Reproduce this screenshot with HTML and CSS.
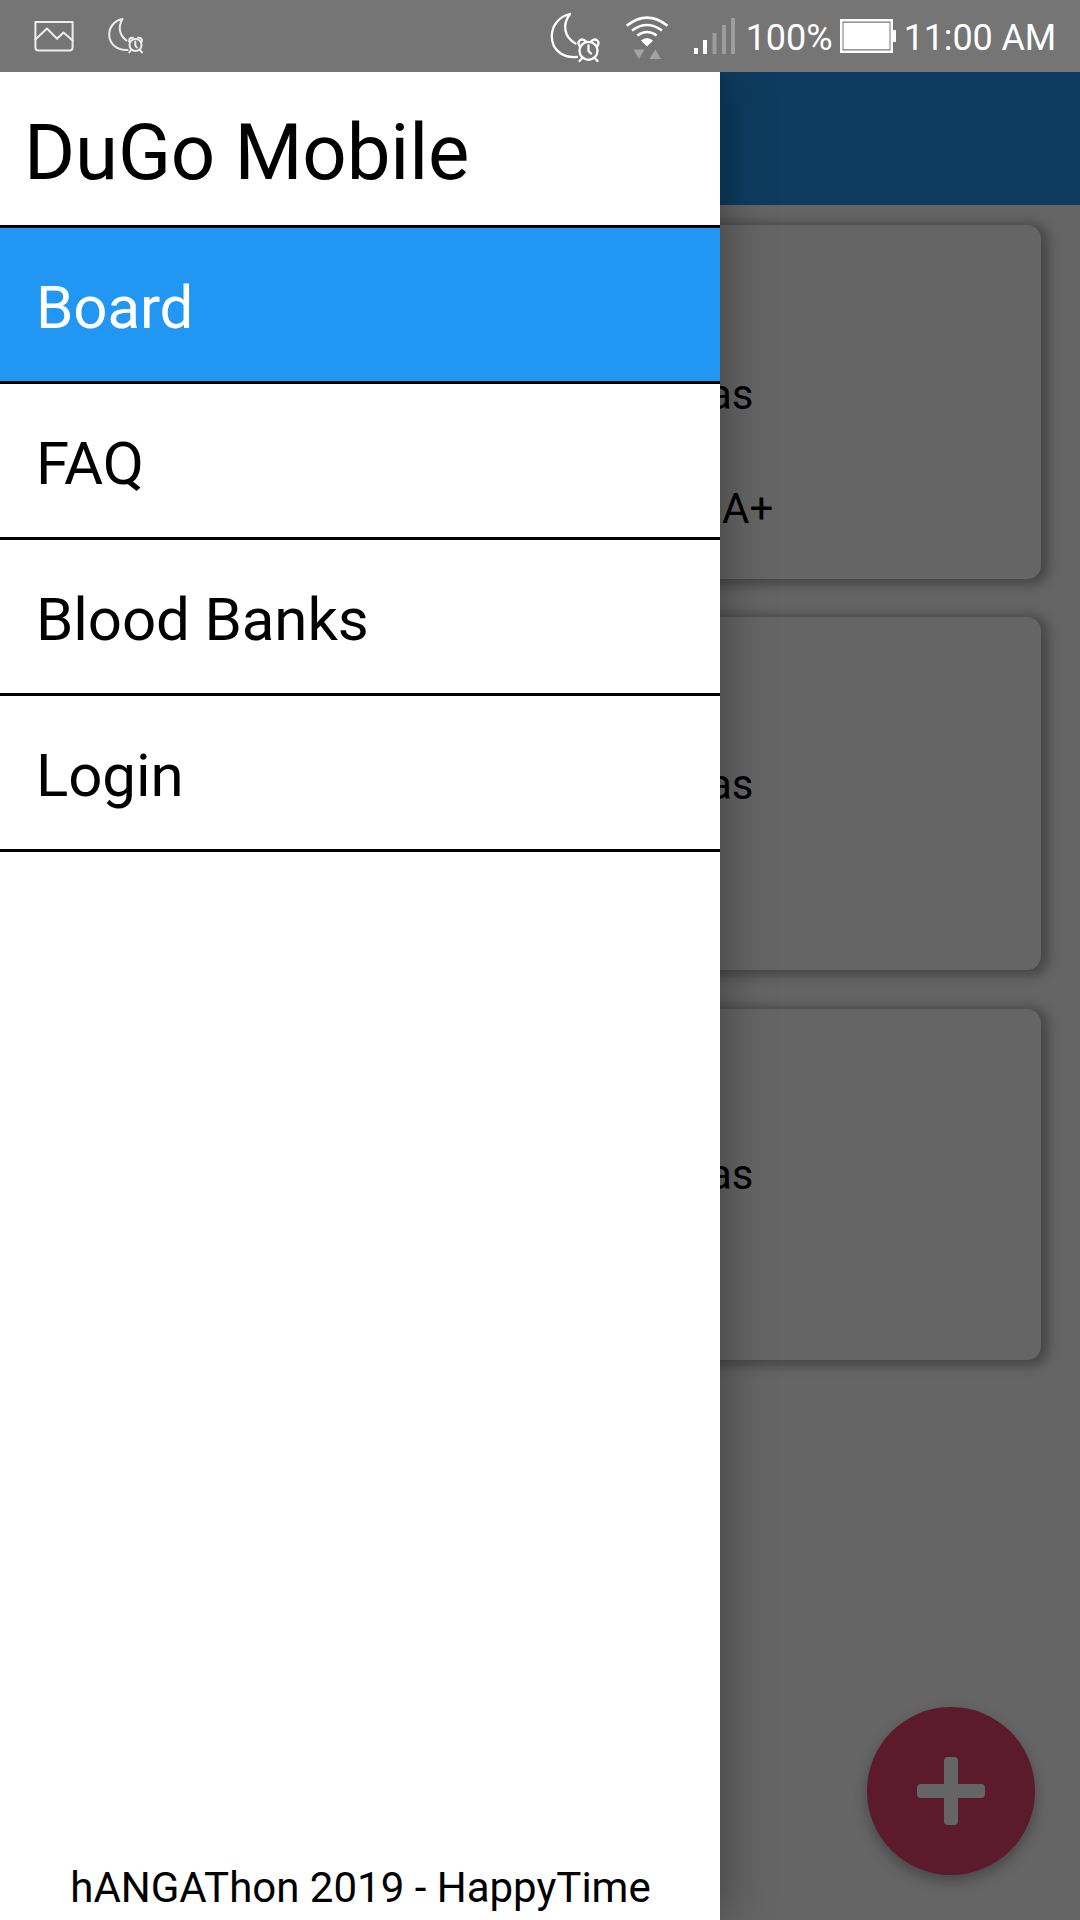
FILE: index.html
```html
<!DOCTYPE html>
<html lang="en">
<head>
<meta charset="utf-8">
<title>DuGo Mobile</title>
<link rel="stylesheet" href="styles.css">
</head>
<body>
<div class="phone">
  <header class="status">
    <div class="status-left">
      <svg width="40" height="34" viewBox="34 19 40 34" class="line soft">
        <path d="M35.4 22H72.6V47.5Q72.6 50.5 69.6 50.5H38.4Q35.4 50.5 35.4 47.5Z"/>
        <path d="M35.4 39.5L47 28.5L57 38.8L63.5 32.5L72.6 40.5"/>
      </svg>
      <svg width="38" height="38" viewBox="107 18 38 38" class="line soft">
        <path d="M127.5 51C116.500 51.500 109.200 44.500 109.200 35.500C109.200 28 114.500 21.500 122.500 20C118 27.500 119 36 126.500 41.500"/>
        <circle cx="135.500" cy="46" r="6"/>
        <path d="M135.300 42.500V46.500L136.800 48.500M129.200 42.500Q128.600 38.500 133 38.800M138 38.800Q142.400 38.500 141.800 42.500M131 51L129.300 53.400M140 51L142 53.400"/>
      </svg>
    </div>
    <div class="status-right">
      <svg class="line moon" width="52" height="52" viewBox="549 11 52 52">
        <path d="M577 57C562 58.500 551.800 49 551.800 36.500C551.800 25.500 559 16.500 570 14C562 24.500 564 37 575.500 43.500"/>
        <circle cx="588.500" cy="50.800" r="9"/>
        <path d="M588.500 45.500V51L591 53.500M579.600 46C576.500 41.500 581 37.500 585.500 41M591.500 41C596 37.500 600.500 41.500 597.400 46M582.500 57.800L579.500 61M594.500 57.800L597.500 61"/>
      </svg>
      <svg class="wifi" width="44" height="46" viewBox="625 15 44 46">
        <path class="arc" d="M626.700 25.800Q647 9.500 667.500 25.800M632 30.500Q647 19.500 662 30.500M637.300 35.500Q647 28.500 656.700 35.500"/>
        <path fill="#fff" d="M641 40.500Q647 35.500 653 40.500L647 46.500Z"/>
        <path fill="#a3a3a3" d="M633.500 49.500H644.500L639 59ZM649.500 59H661L655.300 49.500Z"/>
      </svg>
      <svg class="signal" width="42" height="36" viewBox="694 18 42 36">
        <path fill="#fff" d="M694 48h4v6h-4zM703 40h4v14h-4z"/>
        <path fill="#9d9d9d" d="M712.500 33h4v21h-4zM722 25h4v29h-4zM731 18h4v36h-4z"/>
      </svg>
      <span class="percent">100%</span>
      <svg class="battery" width="56" height="34" viewBox="840 19 56 34">
        <path fill="#fff" fill-rule="evenodd" d="M840 19H893V53H840ZM842.500 21.500V50.500H890.500V21.500Z"/>
        <path fill="#fff" d="M843.500 22.700H889.500V49.300H843.500ZM893 30H896V42H893Z"/>
      </svg>
      <span class="clock">11:00 AM</span>
    </div>
  </header>

  <div class="screen">
    <div class="appbar"></div>
    <main class="cards">
      <section class="card first"><p>as</p><p class="type">A+</p></section>
      <section class="card second"><p>as</p></section>
      <section class="card third"><p>as</p></section>
    </main>

    <button class="fab" aria-label="Add">
      <svg width="68" height="68" viewBox="0 0 68 68" fill="#656565">
        <rect x="27" width="14" height="68" rx="4"/>
        <rect y="27" width="68" height="14" rx="4"/>
      </svg>
    </button>

    <aside class="drawer">
      <h1>DuGo Mobile</h1>
      <nav>
        <a class="item active">Board</a>
        <a class="item">FAQ</a>
        <a class="item">Blood Banks</a>
        <a class="item">Login</a>
      </nav>
      <footer>hANGAThon 2019 - HappyTime</footer>
    </aside>
  </div>
</div>
</body>
</html>
```
FILE: styles.css
```css
* { box-sizing: border-box; }

body {
  margin: 0;
  font-family: Roboto, sans-serif;
  color: #000;
}

.phone {
  width: 1080px;
  height: 1920px;
  display: flex;
  flex-direction: column;
  overflow: hidden;
}

/* Status bar */
.status {
  height: 72px;
  flex: none;
  display: flex;
  justify-content: space-between;
  padding: 0 24px 0 34px;
  background: #757575;
  color: #fff;
  font-size: 36px;
  line-height: 72px;
  white-space: nowrap;
}

.status-left,
.status-right {
  display: flex;
  align-items: center;
}

.status-left { gap: 33px; }

.line {
  fill: none;
  stroke: #fff;
  stroke-width: 2.3;
  stroke-linejoin: round;
  stroke-linecap: round;
}

.soft {
  stroke: #ededed;
  stroke-width: 2;
}

.moon { margin: 2px 24px 0 0; }

.wifi { margin: 4px 25px 0 0; }

.arc {
  fill: none;
  stroke: #fff;
  stroke-width: 2.6;
}

.signal { margin-right: 10px; }

.percent { margin-top: 3px; margin-right: 7px; }

.battery { margin-right: 8px; }

.clock { margin-top: 3px; letter-spacing: -0.15px; }

/* Dimmed board behind the drawer */
.screen {
  position: relative;
  flex: 1;
  overflow: hidden;
  background: #656565;
}

.appbar {
  height: 133px;
  background: #0d3c60;
}

.cards {
  display: flex;
  flex-direction: column;
  padding: 20px 39px;
}

.card {
  border-radius: 14px;
  background: #656565;
  box-shadow: 4px 2px 12px 4px rgba(0, 0, 0, 0.3);
  padding: 146px 0 0 670px;
  font-size: 42px;
  line-height: 48px;
}

.card p { margin: 0; }
.card .type { margin: 66px 0 0 13px; }

.first { height: 354px; }
.second { height: 353px; margin-top: 38px; padding-top: 144px; }
.third { height: 351px; margin-top: 39px; padding-top: 142px; }

.fab {
  position: absolute;
  right: 45px;
  bottom: 45px;
  width: 168px;
  height: 168px;
  display: flex;
  align-items: center;
  justify-content: center;
  padding: 0;
  border: 0;
  border-radius: 50%;
  background: #5c1a2d;
  box-shadow: 0 6px 14px rgba(0, 0, 0, 0.3);
}

/* Navigation drawer */
.drawer {
  position: absolute;
  inset: 0 auto 0 0;
  width: 720px;
  display: flex;
  flex-direction: column;
  background: #fff;
  box-shadow: 0 0 48px rgba(0, 0, 0, 0.4);
}

h1 {
  height: 156px;
  margin: 0;
  padding: 35px 24px 0;
  border-bottom: 3px solid #000;
  font-size: 78px;
  font-weight: 400;
  line-height: 91px;
  letter-spacing: -0.15px;
}

nav {
  display: flex;
  flex-direction: column;
}

.item {
  height: 156px;
  padding: 45px 36px 0;
  border-bottom: 3px solid #000;
  font-size: 60px;
  line-height: 70px;
  letter-spacing: -0.1px;
}

.active {
  background: #2196f3;
  color: #fff;
}

footer {
  margin-top: auto;
  padding: 0 0 8px 1px;
  text-align: center;
  font-size: 42px;
  line-height: 49px;
}
```
